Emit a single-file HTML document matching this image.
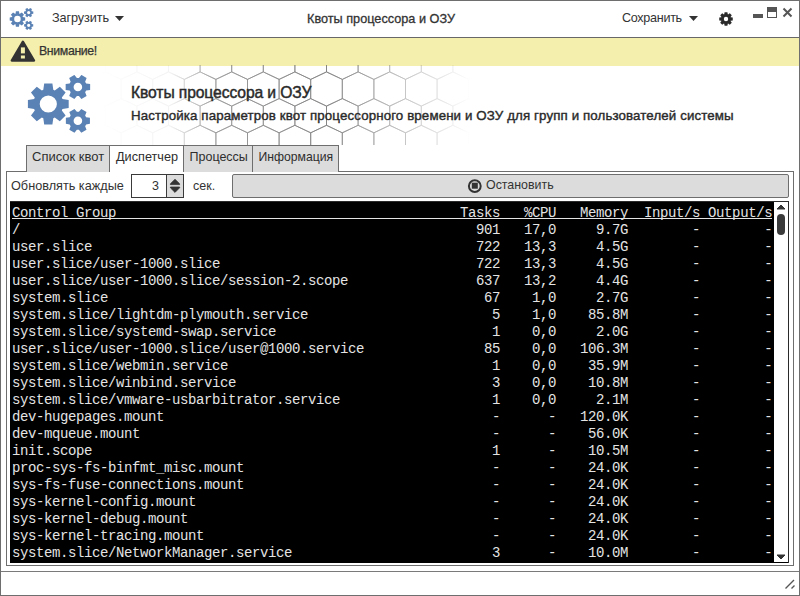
<!DOCTYPE html>
<html><head><meta charset="utf-8">
<style>
*{margin:0;padding:0;box-sizing:border-box}
html,body{width:800px;height:596px;overflow:hidden;background:#fff;font-family:"Liberation Sans",sans-serif;color:#333}
.a{position:absolute;white-space:nowrap}
#win{position:absolute;left:0;top:0;width:800px;height:596px;border:1px solid #6e6e6e}
#tbline{left:1px;top:37px;width:798px;height:1px;background:#686868}
#warn{left:1px;top:38px;width:798px;height:28px;background:#f4efac}
.tab{position:absolute;top:145px;height:27px;border:1px solid #6e6e6e;border-bottom:none;background:#dcdcdc;font-size:13px;color:#2e2e2e}
.tab span{position:absolute;top:3px}
.tab.act{background:#fff;z-index:2}
#panel{left:6px;top:171px;width:788px;height:395px;border:1px solid #6e6e6e;background:#fff}
#term{left:10px;top:201px;width:779px;height:362px;background:#000;border:1px solid #2a2a2a;border-left:none;border-bottom:none}
#sb{left:774px;top:202px;width:14px;height:360px;background:#fff}
pre{font-family:"Liberation Mono",monospace;font-size:14px;letter-spacing:-0.4px;line-height:17px;color:#e4e4e4;position:absolute;left:12px;top:205px;white-space:pre}
#ul{left:12px;top:218px;width:760px;height:1px;background:#e4e4e4}
</style></head><body>
<div id="win"></div>
<div id="tbline" class="a"></div>
<div id="warn" class="a"></div>
<!-- hex pattern -->
<svg class="a" style="left:0;top:65px" width="800" height="80" viewBox="0 65 800 80">
<defs><linearGradient id="hg" x1="0" x2="1" y1="0" y2="0" gradientUnits="objectBoundingBox">
<stop offset="0" stop-color="#fff" stop-opacity="0"/>
<stop offset="0.19" stop-color="#fff" stop-opacity="0.1"/>
<stop offset="0.31" stop-color="#fff" stop-opacity="0.8"/>
<stop offset="0.62" stop-color="#fff" stop-opacity="1"/>
<stop offset="0.81" stop-color="#fff" stop-opacity="0.5"/>
<stop offset="1" stop-color="#fff" stop-opacity="0"/>
</linearGradient>
<mask id="hm" maskUnits="userSpaceOnUse" x="0" y="65" width="800" height="80"><rect x="100" y="65" width="370" height="80" fill="url(#hg)"/></mask></defs>
<path mask="url(#hm)" fill="none" stroke="#7c7c7c" stroke-width="0.75" d="M73.7,18.5 L89.5,26.0 L89.5,45.2 L73.7,52.7 L57.9,45.2 L57.9,26.0ZM105.3,18.5 L121.1,26.0 L121.1,45.2 L105.3,52.7 L89.5,45.2 L89.5,26.0ZM136.9,18.5 L152.7,26.0 L152.7,45.2 L136.9,52.7 L121.1,45.2 L121.1,26.0ZM168.5,18.5 L184.3,26.0 L184.3,45.2 L168.5,52.7 L152.7,45.2 L152.7,26.0ZM200.1,18.5 L215.9,26.0 L215.9,45.2 L200.1,52.7 L184.3,45.2 L184.3,26.0ZM231.7,18.5 L247.5,26.0 L247.5,45.2 L231.7,52.7 L215.9,45.2 L215.9,26.0ZM263.3,18.5 L279.1,26.0 L279.1,45.2 L263.3,52.7 L247.5,45.2 L247.5,26.0ZM294.9,18.5 L310.7,26.0 L310.7,45.2 L294.9,52.7 L279.1,45.2 L279.1,26.0ZM326.5,18.5 L342.3,26.0 L342.3,45.2 L326.5,52.7 L310.7,45.2 L310.7,26.0ZM358.1,18.5 L373.9,26.0 L373.9,45.2 L358.1,52.7 L342.3,45.2 L342.3,26.0ZM389.7,18.5 L405.5,26.0 L405.5,45.2 L389.7,52.7 L373.9,45.2 L373.9,26.0ZM421.3,18.5 L437.1,26.0 L437.1,45.2 L421.3,52.7 L405.5,45.2 L405.5,26.0ZM452.9,18.5 L468.7,26.0 L468.7,45.2 L452.9,52.7 L437.1,45.2 L437.1,26.0ZM484.5,18.5 L500.3,26.0 L500.3,45.2 L484.5,52.7 L468.7,45.2 L468.7,26.0ZM516.1,18.5 L531.9,26.0 L531.9,45.2 L516.1,52.7 L500.3,45.2 L500.3,26.0ZM89.5,45.2 L105.3,52.7 L105.3,71.9 L89.5,79.4 L73.7,71.9 L73.7,52.7ZM121.1,45.2 L136.9,52.7 L136.9,71.9 L121.1,79.4 L105.3,71.9 L105.3,52.7ZM152.7,45.2 L168.5,52.7 L168.5,71.9 L152.7,79.4 L136.9,71.9 L136.9,52.7ZM184.3,45.2 L200.1,52.7 L200.1,71.9 L184.3,79.4 L168.5,71.9 L168.5,52.7ZM215.9,45.2 L231.7,52.7 L231.7,71.9 L215.9,79.4 L200.1,71.9 L200.1,52.7ZM247.5,45.2 L263.3,52.7 L263.3,71.9 L247.5,79.4 L231.7,71.9 L231.7,52.7ZM279.1,45.2 L294.9,52.7 L294.9,71.9 L279.1,79.4 L263.3,71.9 L263.3,52.7ZM310.7,45.2 L326.5,52.7 L326.5,71.9 L310.7,79.4 L294.9,71.9 L294.9,52.7ZM342.3,45.2 L358.1,52.7 L358.1,71.9 L342.3,79.4 L326.5,71.9 L326.5,52.7ZM373.9,45.2 L389.7,52.7 L389.7,71.9 L373.9,79.4 L358.1,71.9 L358.1,52.7ZM405.5,45.2 L421.3,52.7 L421.3,71.9 L405.5,79.4 L389.7,71.9 L389.7,52.7ZM437.1,45.2 L452.9,52.7 L452.9,71.9 L437.1,79.4 L421.3,71.9 L421.3,52.7ZM468.7,45.2 L484.5,52.7 L484.5,71.9 L468.7,79.4 L452.9,71.9 L452.9,52.7ZM500.3,45.2 L516.1,52.7 L516.1,71.9 L500.3,79.4 L484.5,71.9 L484.5,52.7ZM531.9,45.2 L547.7,52.7 L547.7,71.9 L531.9,79.4 L516.1,71.9 L516.1,52.7ZM73.7,71.9 L89.5,79.4 L89.5,98.6 L73.7,106.1 L57.9,98.6 L57.9,79.4ZM105.3,71.9 L121.1,79.4 L121.1,98.6 L105.3,106.1 L89.5,98.6 L89.5,79.4ZM136.9,71.9 L152.7,79.4 L152.7,98.6 L136.9,106.1 L121.1,98.6 L121.1,79.4ZM168.5,71.9 L184.3,79.4 L184.3,98.6 L168.5,106.1 L152.7,98.6 L152.7,79.4ZM200.1,71.9 L215.9,79.4 L215.9,98.6 L200.1,106.1 L184.3,98.6 L184.3,79.4ZM231.7,71.9 L247.5,79.4 L247.5,98.6 L231.7,106.1 L215.9,98.6 L215.9,79.4ZM263.3,71.9 L279.1,79.4 L279.1,98.6 L263.3,106.1 L247.5,98.6 L247.5,79.4ZM294.9,71.9 L310.7,79.4 L310.7,98.6 L294.9,106.1 L279.1,98.6 L279.1,79.4ZM326.5,71.9 L342.3,79.4 L342.3,98.6 L326.5,106.1 L310.7,98.6 L310.7,79.4ZM358.1,71.9 L373.9,79.4 L373.9,98.6 L358.1,106.1 L342.3,98.6 L342.3,79.4ZM389.7,71.9 L405.5,79.4 L405.5,98.6 L389.7,106.1 L373.9,98.6 L373.9,79.4ZM421.3,71.9 L437.1,79.4 L437.1,98.6 L421.3,106.1 L405.5,98.6 L405.5,79.4ZM452.9,71.9 L468.7,79.4 L468.7,98.6 L452.9,106.1 L437.1,98.6 L437.1,79.4ZM484.5,71.9 L500.3,79.4 L500.3,98.6 L484.5,106.1 L468.7,98.6 L468.7,79.4ZM516.1,71.9 L531.9,79.4 L531.9,98.6 L516.1,106.1 L500.3,98.6 L500.3,79.4ZM89.5,98.6 L105.3,106.1 L105.3,125.3 L89.5,132.8 L73.7,125.3 L73.7,106.1ZM121.1,98.6 L136.9,106.1 L136.9,125.3 L121.1,132.8 L105.3,125.3 L105.3,106.1ZM152.7,98.6 L168.5,106.1 L168.5,125.3 L152.7,132.8 L136.9,125.3 L136.9,106.1ZM184.3,98.6 L200.1,106.1 L200.1,125.3 L184.3,132.8 L168.5,125.3 L168.5,106.1ZM215.9,98.6 L231.7,106.1 L231.7,125.3 L215.9,132.8 L200.1,125.3 L200.1,106.1ZM247.5,98.6 L263.3,106.1 L263.3,125.3 L247.5,132.8 L231.7,125.3 L231.7,106.1ZM279.1,98.6 L294.9,106.1 L294.9,125.3 L279.1,132.8 L263.3,125.3 L263.3,106.1ZM310.7,98.6 L326.5,106.1 L326.5,125.3 L310.7,132.8 L294.9,125.3 L294.9,106.1ZM342.3,98.6 L358.1,106.1 L358.1,125.3 L342.3,132.8 L326.5,125.3 L326.5,106.1ZM373.9,98.6 L389.7,106.1 L389.7,125.3 L373.9,132.8 L358.1,125.3 L358.1,106.1ZM405.5,98.6 L421.3,106.1 L421.3,125.3 L405.5,132.8 L389.7,125.3 L389.7,106.1ZM437.1,98.6 L452.9,106.1 L452.9,125.3 L437.1,132.8 L421.3,125.3 L421.3,106.1ZM468.7,98.6 L484.5,106.1 L484.5,125.3 L468.7,132.8 L452.9,125.3 L452.9,106.1ZM500.3,98.6 L516.1,106.1 L516.1,125.3 L500.3,132.8 L484.5,125.3 L484.5,106.1ZM531.9,98.6 L547.7,106.1 L547.7,125.3 L531.9,132.8 L516.1,125.3 L516.1,106.1ZM73.7,125.3 L89.5,132.8 L89.5,152.0 L73.7,159.5 L57.9,152.0 L57.9,132.8ZM105.3,125.3 L121.1,132.8 L121.1,152.0 L105.3,159.5 L89.5,152.0 L89.5,132.8ZM136.9,125.3 L152.7,132.8 L152.7,152.0 L136.9,159.5 L121.1,152.0 L121.1,132.8ZM168.5,125.3 L184.3,132.8 L184.3,152.0 L168.5,159.5 L152.7,152.0 L152.7,132.8ZM200.1,125.3 L215.9,132.8 L215.9,152.0 L200.1,159.5 L184.3,152.0 L184.3,132.8ZM231.7,125.3 L247.5,132.8 L247.5,152.0 L231.7,159.5 L215.9,152.0 L215.9,132.8ZM263.3,125.3 L279.1,132.8 L279.1,152.0 L263.3,159.5 L247.5,152.0 L247.5,132.8ZM294.9,125.3 L310.7,132.8 L310.7,152.0 L294.9,159.5 L279.1,152.0 L279.1,132.8ZM326.5,125.3 L342.3,132.8 L342.3,152.0 L326.5,159.5 L310.7,152.0 L310.7,132.8ZM358.1,125.3 L373.9,132.8 L373.9,152.0 L358.1,159.5 L342.3,152.0 L342.3,132.8ZM389.7,125.3 L405.5,132.8 L405.5,152.0 L389.7,159.5 L373.9,152.0 L373.9,132.8ZM421.3,125.3 L437.1,132.8 L437.1,152.0 L421.3,159.5 L405.5,152.0 L405.5,132.8ZM452.9,125.3 L468.7,132.8 L468.7,152.0 L452.9,159.5 L437.1,152.0 L437.1,132.8ZM484.5,125.3 L500.3,132.8 L500.3,152.0 L484.5,159.5 L468.7,152.0 L468.7,132.8ZM516.1,125.3 L531.9,132.8 L531.9,152.0 L516.1,159.5 L500.3,152.0 L500.3,132.8ZM89.5,152.0 L105.3,159.5 L105.3,178.7 L89.5,186.2 L73.7,178.7 L73.7,159.5ZM121.1,152.0 L136.9,159.5 L136.9,178.7 L121.1,186.2 L105.3,178.7 L105.3,159.5ZM152.7,152.0 L168.5,159.5 L168.5,178.7 L152.7,186.2 L136.9,178.7 L136.9,159.5ZM184.3,152.0 L200.1,159.5 L200.1,178.7 L184.3,186.2 L168.5,178.7 L168.5,159.5ZM215.9,152.0 L231.7,159.5 L231.7,178.7 L215.9,186.2 L200.1,178.7 L200.1,159.5ZM247.5,152.0 L263.3,159.5 L263.3,178.7 L247.5,186.2 L231.7,178.7 L231.7,159.5ZM279.1,152.0 L294.9,159.5 L294.9,178.7 L279.1,186.2 L263.3,178.7 L263.3,159.5ZM310.7,152.0 L326.5,159.5 L326.5,178.7 L310.7,186.2 L294.9,178.7 L294.9,159.5ZM342.3,152.0 L358.1,159.5 L358.1,178.7 L342.3,186.2 L326.5,178.7 L326.5,159.5ZM373.9,152.0 L389.7,159.5 L389.7,178.7 L373.9,186.2 L358.1,178.7 L358.1,159.5ZM405.5,152.0 L421.3,159.5 L421.3,178.7 L405.5,186.2 L389.7,178.7 L389.7,159.5ZM437.1,152.0 L452.9,159.5 L452.9,178.7 L437.1,186.2 L421.3,178.7 L421.3,159.5ZM468.7,152.0 L484.5,159.5 L484.5,178.7 L468.7,186.2 L452.9,178.7 L452.9,159.5ZM500.3,152.0 L516.1,159.5 L516.1,178.7 L500.3,186.2 L484.5,178.7 L484.5,159.5ZM531.9,152.0 L547.7,159.5 L547.7,178.7 L531.9,186.2 L516.1,178.7 L516.1,159.5Z"/>
</svg>
<!-- title bar -->
<svg class="a" style="left:9px;top:8px" width="25" height="22" viewBox="0 0 64 58"><g fill="#5b82b4"><path fill-rule="evenodd" d="M35.44,24.00 L41.69,24.90 L41.69,33.10 L35.44,34.00 L34.84,35.46 L38.62,40.52 L32.82,46.32 L27.76,42.54 L26.30,43.14 L25.40,49.39 L17.20,49.39 L16.30,43.14 L14.84,42.54 L9.78,46.32 L3.98,40.52 L7.76,35.46 L7.16,34.00 L0.91,33.10 L0.91,24.90 L7.16,24.00 L7.76,22.54 L3.98,17.48 L9.78,11.68 L14.84,15.46 L16.30,14.86 L17.20,8.61 L25.40,8.61 L26.30,14.86 L27.76,15.46 L32.82,11.68 L38.62,17.48 L34.84,22.54Z M29.90,29.00 A8.6,8.6 0 1,0 12.70,29.00 A8.6,8.6 0 1,0 29.90,29.00Z"/><path fill-rule="evenodd" d="M59.15,8.40 L63.14,9.00 L63.14,15.00 L59.15,15.60 L58.14,17.34 L59.62,21.10 L54.42,24.10 L51.91,20.94 L49.89,20.94 L47.38,24.10 L42.18,21.10 L43.66,17.34 L42.65,15.60 L38.66,15.00 L38.66,9.00 L42.65,8.40 L43.66,6.66 L42.18,2.90 L47.38,-0.10 L49.89,3.06 L51.91,3.06 L54.42,-0.10 L59.62,2.90 L58.14,6.66Z M55.20,12.00 A4.3,4.3 0 1,0 46.60,12.00 A4.3,4.3 0 1,0 55.20,12.00Z"/><path fill-rule="evenodd" d="M59.15,42.20 L62.93,42.80 L62.93,48.80 L59.15,49.40 L58.14,51.14 L59.51,54.72 L54.32,57.72 L51.91,54.74 L49.89,54.74 L47.48,57.72 L42.29,54.72 L43.66,51.14 L42.65,49.40 L38.87,48.80 L38.87,42.80 L42.65,42.20 L43.66,40.46 L42.29,36.88 L47.48,33.88 L49.89,36.86 L51.91,36.86 L54.32,33.88 L59.51,36.88 L58.14,40.46Z M55.20,45.80 A4.3,4.3 0 1,0 46.60,45.80 A4.3,4.3 0 1,0 55.20,45.80Z"/></g></svg>
<div class="a" style="left:52px;top:11px;font-size:12.7px;letter-spacing:-0.1px">Загрузить</div>
<svg class="a" style="left:115px;top:16px" width="9" height="5"><path d="M0,0H9L4.5,5Z" fill="#333"/></svg>
<div class="a" style="left:307px;top:12px;font-size:12.7px;-webkit-text-stroke:0.3px #333">Квоты процессора и ОЗУ</div>
<div class="a" style="left:622px;top:11px;font-size:12.6px;letter-spacing:-0.3px">Сохранить</div>
<svg class="a" style="left:689px;top:16px" width="9" height="5"><path d="M0,0H9L4.5,5Z" fill="#333"/></svg>
<svg class="a" style="left:719px;top:12px" width="14" height="14" viewBox="0 0 14 14"><path fill-rule="evenodd" fill="#2a2a2a" d="M11.66,5.20 L13.76,5.60 L13.76,8.40 L11.66,8.80 L11.57,9.03 L12.77,10.79 L10.79,12.77 L9.03,11.57 L8.80,11.66 L8.40,13.76 L5.60,13.76 L5.20,11.66 L4.97,11.57 L3.21,12.77 L1.23,10.79 L2.43,9.03 L2.34,8.80 L0.24,8.40 L0.24,5.60 L2.34,5.20 L2.43,4.97 L1.23,3.21 L3.21,1.23 L4.97,2.43 L5.20,2.34 L5.60,0.24 L8.40,0.24 L8.80,2.34 L9.03,2.43 L10.79,1.23 L12.77,3.21 L11.57,4.97Z M9.20,7.00 A2.2,2.2 0 1,0 4.80,7.00 A2.2,2.2 0 1,0 9.20,7.00Z"/></svg>
<div class="a" style="left:753px;top:14px;width:10px;height:4px;background:#555"></div>
<div class="a" style="left:767px;top:7px;width:10px;height:11px;border:1px solid #555;border-top:5px solid #555"></div>
<svg class="a" style="left:782px;top:7px" width="11" height="11"><path d="M1.5,1.5L9.5,9.5M9.5,1.5L1.5,9.5" stroke="#555" stroke-width="2"/></svg>
<!-- warning -->
<svg class="a" style="left:10px;top:40px" width="26" height="22" viewBox="0 0 26 22"><path d="M12.9,1.6 L24.1,20.6 L1.7,20.6Z" fill="#333" stroke="#333" stroke-linejoin="round" stroke-width="2.2"/><rect x="10.9" y="7.4" width="4" height="6" fill="#f4efac"/><rect x="10.9" y="15.5" width="4" height="3" fill="#f4efac"/></svg>
<div class="a" style="left:39px;top:44px;font-size:12.3px;letter-spacing:-0.35px;-webkit-text-stroke:0.25px #333">Внимание!</div>
<!-- header -->
<svg class="a" style="left:27px;top:75px" width="64" height="58" viewBox="0 0 64 58"><g fill="#5b82b4"><path fill-rule="evenodd" d="M35.44,24.00 L41.69,24.90 L41.69,33.10 L35.44,34.00 L34.84,35.46 L38.62,40.52 L32.82,46.32 L27.76,42.54 L26.30,43.14 L25.40,49.39 L17.20,49.39 L16.30,43.14 L14.84,42.54 L9.78,46.32 L3.98,40.52 L7.76,35.46 L7.16,34.00 L0.91,33.10 L0.91,24.90 L7.16,24.00 L7.76,22.54 L3.98,17.48 L9.78,11.68 L14.84,15.46 L16.30,14.86 L17.20,8.61 L25.40,8.61 L26.30,14.86 L27.76,15.46 L32.82,11.68 L38.62,17.48 L34.84,22.54Z M29.90,29.00 A8.6,8.6 0 1,0 12.70,29.00 A8.6,8.6 0 1,0 29.90,29.00Z"/><path fill-rule="evenodd" d="M59.15,8.40 L63.14,9.00 L63.14,15.00 L59.15,15.60 L58.14,17.34 L59.62,21.10 L54.42,24.10 L51.91,20.94 L49.89,20.94 L47.38,24.10 L42.18,21.10 L43.66,17.34 L42.65,15.60 L38.66,15.00 L38.66,9.00 L42.65,8.40 L43.66,6.66 L42.18,2.90 L47.38,-0.10 L49.89,3.06 L51.91,3.06 L54.42,-0.10 L59.62,2.90 L58.14,6.66Z M55.20,12.00 A4.3,4.3 0 1,0 46.60,12.00 A4.3,4.3 0 1,0 55.20,12.00Z"/><path fill-rule="evenodd" d="M59.15,42.20 L62.93,42.80 L62.93,48.80 L59.15,49.40 L58.14,51.14 L59.51,54.72 L54.32,57.72 L51.91,54.74 L49.89,54.74 L47.48,57.72 L42.29,54.72 L43.66,51.14 L42.65,49.40 L38.87,48.80 L38.87,42.80 L42.65,42.20 L43.66,40.46 L42.29,36.88 L47.48,33.88 L49.89,36.86 L51.91,36.86 L54.32,33.88 L59.51,36.88 L58.14,40.46Z M55.20,45.80 A4.3,4.3 0 1,0 46.60,45.80 A4.3,4.3 0 1,0 55.20,45.80Z"/></g></svg>
<div class="a" style="left:131px;top:84px;font-size:15.7px;letter-spacing:-0.12px;-webkit-text-stroke:0.45px #2a2a2a;color:#2a2a2a">Квоты процессора и ОЗУ</div>
<div class="a" style="left:131px;top:108px;font-size:13.3px;-webkit-text-stroke:0.4px #2a2a2a;letter-spacing:0.12px;color:#2a2a2a">Настройка параметров квот процессорного времени и ОЗУ для групп и пользователей системы</div>
<!-- panel -->
<div id="panel" class="a"></div>
<div class="tab" style="left:26px;width:84px"><span style="left:5px">Список квот</span></div>
<div class="tab act" style="left:109px;width:75px"><span style="left:6px;font-size:12.7px;top:3.5px">Диспетчер</span></div>
<div class="tab" style="left:183px;width:70px"><span style="left:5.5px;font-size:12.5px;top:3.5px">Процессы</span></div>
<div class="tab" style="left:252px;width:87px"><span style="left:5.5px;font-size:12.2px;top:4px">Информация</span></div>
<div class="a" style="left:11px;top:179px;font-size:12.7px">Обновлять каждые</div>
<div class="a" style="left:131px;top:174px;width:53px;height:24px;border:1px solid #3a3a3a;background:#fff"></div>
<div class="a" style="left:166px;top:175px;width:17px;height:22px;border-left:1px solid #3a3a3a;background:#dcdcdc"></div>
<svg class="a" style="left:169px;top:178px" width="12" height="16" viewBox="0 0 12 16"><path d="M6,1.3 L10.6,5.8 L10.6,6.6 L1.4,6.6 L1.4,5.8Z M1.4,9.0 L10.6,9.0 L10.6,9.8 L6,14.4 L1.4,9.8Z" fill="#333" stroke="#333" stroke-width="0.8" stroke-linejoin="round"/></svg>
<div class="a" style="left:152px;top:179px;font-size:12.5px">3</div>
<div class="a" style="left:193px;top:179px;font-size:12.5px">сек.</div>
<div class="a" style="left:232px;top:174px;width:557px;height:24px;border:1px solid #6e6e6e;border-radius:2px;background:#dcdcdc"></div>
<svg class="a" style="left:467px;top:178px" width="16" height="16" viewBox="0 0 16 16"><circle cx="7.8" cy="8.1" r="5.9" fill="none" stroke="#333" stroke-width="2"/><rect x="4.8" y="4.7" width="6" height="6" fill="#333"/></svg>
<div class="a" style="left:486px;top:178px;font-size:12.4px">Остановить</div>
<!-- terminal -->
<div id="term" class="a"></div>
<div id="sb" class="a"></div>
<svg class="a" style="left:776px;top:204px" width="10" height="6"><path d="M1,5 L5,1 L9,5Z" fill="#333" stroke="#333" stroke-linejoin="round"/></svg>
<div class="a" style="left:777px;top:214px;width:8px;height:21px;border-radius:4px;background:#3a3a3a"></div>
<svg class="a" style="left:776px;top:554px" width="10" height="6"><path d="M1,1 L9,1 L5,5Z" fill="#333" stroke="#333" stroke-linejoin="round"/></svg>
<pre>Control Group                                           Tasks   %CPU   Memory  Input/s Output/s
/                                                         901   17,0     9.7G        -        -
user.slice                                                722   13,3     4.5G        -        -
user.slice/user-1000.slice                                722   13,3     4.5G        -        -
user.slice/user-1000.slice/session-2.scope                637   13,2     4.4G        -        -
system.slice                                               67    1,0     2.7G        -        -
system.slice/lightdm-plymouth.service                       5    1,0    85.8M        -        -
system.slice/systemd-swap.service                           1    0,0     2.0G        -        -
user.slice/user-1000.slice/user@1000.service               85    0,0   106.3M        -        -
system.slice/webmin.service                                 1    0,0    35.9M        -        -
system.slice/winbind.service                                3    0,0    10.8M        -        -
system.slice/vmware-usbarbitrator.service                   1    0,0     2.1M        -        -
dev-hugepages.mount                                         -      -   120.0K        -        -
dev-mqueue.mount                                            -      -    56.0K        -        -
init.scope                                                  1      -    10.5M        -        -
proc-sys-fs-binfmt_misc.mount                               -      -    24.0K        -        -
sys-fs-fuse-connections.mount                               -      -    24.0K        -        -
sys-kernel-config.mount                                     -      -    24.0K        -        -
sys-kernel-debug.mount                                      -      -    24.0K        -        -
sys-kernel-tracing.mount                                    -      -    24.0K        -        -
system.slice/NetworkManager.service                         3      -    10.0M        -        -</pre>
<div id="ul" class="a"></div>
<!-- status -->
<div class="a" style="left:1px;top:571px;width:798px;height:1px;background:#7a7a7a"></div>
<svg class="a" style="left:784px;top:579px" width="12" height="12"><path d="M1.5,9.5L10,1M7.5,9.5L10.5,6.5" stroke="#555" stroke-width="1.4"/></svg>
</body></html>
